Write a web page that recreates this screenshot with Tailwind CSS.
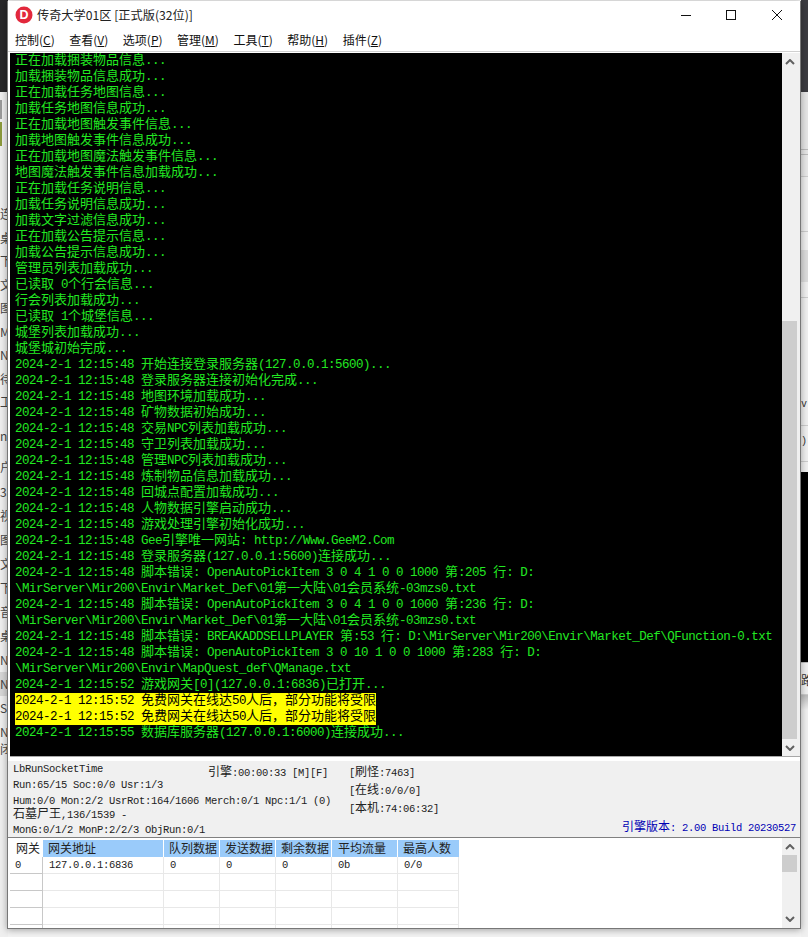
<!DOCTYPE html>
<html lang="en">
<head>
  <meta charset="UTF-8" />
  <title>传奇大学01区</title>
  <script src="https://cdn.jsdelivr.net/npm/@tailwindcss/browser@4"></script>
</head>
<body class="relative w-[808px] h-[937px] overflow-hidden bg-[#f3f3f3] font-['Noto_Sans_CJK_SC',sans-serif]">
  <!-- desktop behind the window, left edge -->
  <div class="absolute left-0 top-0 w-[8px] h-full overflow-hidden flex flex-col bg-[#efefef]">
    <div class="h-[92px] shrink-0 bg-[#28282a]"></div>
    <div class="h-[8px] shrink-0"></div>
    <div class="h-[19px] w-[2px] shrink-0 bg-[#9a9a9a]"></div>
    <div class="h-[3px] shrink-0"></div>
    <div class="h-[24px] w-[2px] shrink-0 bg-[#8b9a3c]"></div>
    <div class="h-[56px] shrink-0"></div>
    <div id="leftLabels" class="flex flex-col text-[12px] leading-[24px] text-[#444] whitespace-nowrap"></div>
    <div class="-mt-[3px] text-[12px] leading-[16px] text-[#444] whitespace-nowrap">闭</div>
  </div>

  <!-- desktop behind the window, right edge -->
  <div class="absolute left-[801px] top-0 w-[7px] h-full overflow-hidden flex flex-col bg-[#f0f0f0] text-[12px] leading-[16px] text-[#333] whitespace-nowrap">
    <div class="h-[92px] shrink-0 bg-[#3b3b40]"></div>
    <div class="h-[58px] shrink-0 bg-[#e6e6e6] border-b border-[#bbbbbb]"></div>
    <div class="h-[5px] shrink-0 bg-[#e6e6e6] border-b border-[#bbbbbb]"></div>
    <div class="h-[22px] shrink-0 bg-[#e8e8e8] border-b border-[#cccccc]"></div>
    <div class="h-[55px] shrink-0 bg-[#eeeeee] border-b border-[#cccccc]"></div>
    <div class="h-[18px] shrink-0"></div>
    <div class="h-[32px] shrink-0 bg-[#dcdcdc]"></div>
    <div class="h-[16px] shrink-0 border-b border-[#cccccc]"></div>
    <div class="h-[128px] shrink-0 pt-[99px] border-b border-[#cccccc] text-[10px] font-['Liberation_Mono',monospace]">v</div>
    <div class="h-[36px] shrink-0 border-b border-[#cccccc] pt-[8px] text-[10px] font-['Liberation_Mono',monospace]">)</div>
    <div class="h-[10px] shrink-0"></div>
    <div class="h-[190px] shrink-0 bg-black"></div>
    <div class="h-[10px] shrink-0 border-t border-[#bbbbbb]"></div>
    <div class="h-[23px] shrink-0 border-b border-[#cccccc]">路</div>
    <div class="h-[15px] shrink-0 bg-gradient-to-b from-[#bbbbbb] to-[#f0f0f0]"></div>
  </div>

  <!-- main window -->
  <div class="absolute left-[7px] top-[1px] w-[794px] h-[928px] flex flex-col bg-white border-x border-b border-[#777777] shadow-[0_1px_7px_rgba(0,0,0,0.35)]">
    <!-- title bar -->
    <div class="h-[27px] shrink-0 flex items-center relative">
      <svg class="ml-[7px] mr-[4px]" width="18" height="18" viewBox="0 0 18 18">
        <circle cx="9" cy="9" r="8.5" fill="#e2283c" />
        <text x="9" y="13.4" text-anchor="middle" font-size="12.5" font-weight="700" fill="#ffffff" font-family="Liberation Sans, sans-serif">D</text>
      </svg>
      <span class="text-[12.2px] leading-[16px] text-[#222]">传奇大学01区 [正式版(32位)]</span>
      <div class="ml-auto flex items-center h-full">
        <svg width="46" height="27" viewBox="0 0 46 27"><path d="M9 14.500H19" stroke="#111" stroke-width="1" /></svg>
        <svg width="46" height="27" viewBox="0 0 46 27"><rect x="8.500" y="9.500" width="9" height="9" fill="none" stroke="#111" stroke-width="1" /></svg>
        <svg width="36" height="27" viewBox="0 0 36 27"><path d="M8 9L18 19M18 9L8 19" stroke="#111" stroke-width="1" /></svg>
      </div>
    </div>
    <!-- menu -->
    <div class="h-[23px] shrink-0 flex items-center pl-[7px] gap-[14.5px] text-[12px] leading-[16px] text-[#111]">
      <span>控制(<u>C</u>)</span>
      <span>查看(<u>V</u>)</span>
      <span>选项(<u>P</u>)</span>
      <span>管理(<u>M</u>)</span>
      <span>工具(<u>T</u>)</span>
      <span>帮助(<u>H</u>)</span>
      <span>插件(<u>Z</u>)</span>
    </div>
    <div class="h-[2px] shrink-0 border-t border-[#d0d0d0] bg-white"></div>

    <!-- log -->
    <div class="h-[703px] shrink-0 flex pl-[2px]">
      <div id="log" class="flex-1 bg-black pl-[5px] overflow-hidden text-[#22e822] font-['Liberation_Mono','Noto_Sans_CJK_SC',monospace] text-[12.5px] tracking-[-0.5px] leading-[16px] whitespace-pre"></div>
      <div class="w-[18px] shrink-0 bg-[#f0f0f0] flex flex-col">
        <div class="h-[17px] shrink-0 flex items-center justify-center pr-[2px]">
          <svg width="10" height="6" viewBox="0 0 10 6"><path d="M1 5L5 1L9 5" fill="none" stroke="#606060" stroke-width="2" /></svg>
        </div>
        <div class="h-[251px] shrink-0"></div>
        <div class="h-[418px] shrink-0 w-[15px] bg-[#cdcdcd]"></div>
        <div class="flex-1 flex items-center justify-center pr-[2px]">
          <svg width="10" height="6" viewBox="0 0 10 6"><path d="M1 1L5 5L9 1" fill="none" stroke="#606060" stroke-width="2" /></svg>
        </div>
      </div>
    </div>
    <div class="h-[5px] shrink-0 ml-[2px] border-t border-[#a8a8a8] bg-white"></div>

    <!-- status panel -->
    <div class="h-[76px] shrink-0 grid bg-[#f0f0f0] text-[#222] font-['Liberation_Mono','Noto_Sans_CJK_SC',monospace] text-[10.5px] tracking-[-0.3px] whitespace-pre">
      <div class="col-start-1 row-start-1 pl-[5px] flex flex-col">
        <div data-mix class="h-[16px] leading-[16px]">LbRunSocketTime</div>
        <div data-mix class="h-[16px] leading-[16px]">Run:65/15 Soc:0/0 Usr:1/3</div>
        <div data-mix class="h-[14px] leading-[16px]">Hum:0/0 Mon:2/2 UsrRot:164/1606 Merch:0/1 Npc:1/1 (0)</div>
        <div data-mix class="h-[15px] leading-[16px]">石墓尸王,136/1539 -</div>
        <div data-mix class="h-[15px] leading-[16px]">MonG:0/1/2 MonP:2/2/3 ObjRun:0/1</div>
      </div>
      <div data-mix class="col-start-1 row-start-1 pl-[200px] pt-[4px] leading-[16px]">引擎:00:00:33 [M][F]</div>
      <div class="col-start-1 row-start-1 pl-[341px] pt-[3px] flex flex-col">
        <div data-mix class="h-[18px] leading-[18px]">[刷怪:7463]</div>
        <div data-mix class="h-[18px] leading-[18px]">[在线:0/0/0]</div>
        <div data-mix class="h-[18px] leading-[18px]">[本机:74:06:32]</div>
      </div>
      <div data-mix class="col-start-1 row-start-1 self-end justify-self-end pr-[4px] pb-[1px] leading-[16px] text-[#0000b4]">引擎版本: 2.00 Build 20230527</div>
    </div>

    <!-- gateway grid -->
    <div class="flex-1 min-h-0 flex border-t border-[#808080] bg-white">
      <div class="flex-1 pl-[2px] pt-[2px] overflow-hidden text-[12px] text-[#222]">
        <div class="grid grid-cols-[33px_121px_56px_56px_56px_66px_61px] h-[17px]">
          <div class="pl-[6px] leading-[16px] border-r border-white">网关</div>
          <div class="pl-[5px] leading-[16px] bg-[#9acbfa] border-r border-white">网关地址</div>
          <div class="pl-[5px] leading-[16px] bg-[#9acbfa] border-r border-white">队列数据</div>
          <div class="pl-[5px] leading-[16px] bg-[#9acbfa] border-r border-white">发送数据</div>
          <div class="pl-[5px] leading-[16px] bg-[#9acbfa] border-r border-white">剩余数据</div>
          <div class="pl-[6px] leading-[16px] bg-[#9acbfa] border-r border-white">平均流量</div>
          <div class="pl-[5px] leading-[16px] bg-[#9acbfa]">最高人数</div>
        </div>
        <div id="rows" class="font-['Liberation_Mono',monospace] text-[10.5px] tracking-[-0.3px]"></div>
      </div>
      <div class="w-[18px] shrink-0 bg-[#f0f0f0] flex flex-col">
        <div class="h-[17px] shrink-0 flex items-center justify-center pr-[2px]">
          <svg width="10" height="6" viewBox="0 0 10 6"><path d="M1 5L5 1L9 5" fill="none" stroke="#606060" stroke-width="2" /></svg>
        </div>
        <div class="h-[17px] shrink-0 w-[15px] bg-[#cdcdcd]"></div>
        <div class="flex-1 flex items-end justify-center pb-[6px] pr-[2px]">
          <svg width="10" height="6" viewBox="0 0 10 6"><path d="M1 1L5 5L9 1" fill="none" stroke="#606060" stroke-width="2" /></svg>
        </div>
      </div>
    </div>
  </div>

  <script>
    const CJK = /([\u3000-\u9fff\uff00-\uffef]+)/;

    // Latin runs are 7px wide in the log, the CJK runs 13px: wrap them so each gets its own size
    function mix(el, text, cjkClass) {
      text.split(CJK).forEach((part, i) => {
        if (!part) return;
        if (i % 2) {
          const s = document.createElement('span');
          s.className = cjkClass;
          s.textContent = part;
          el.appendChild(s);
        } else {
          el.appendChild(document.createTextNode(part));
        }
      });
    }

    const t = '2024-2-1 12:15:48 ';
    const logLines = [
      '正在加载捆装物品信息...',
      '加载捆装物品信息成功...',
      '正在加载任务地图信息...',
      '加载任务地图信息成功...',
      '正在加载地图触发事件信息...',
      '加载地图触发事件信息成功...',
      '正在加载地图魔法触发事件信息...',
      '地图魔法触发事件信息加载成功...',
      '正在加载任务说明信息...',
      '加载任务说明信息成功...',
      '加载文字过滤信息成功...',
      '正在加载公告提示信息...',
      '加载公告提示信息成功...',
      '管理员列表加载成功...',
      '已读取 0个行会信息...',
      '行会列表加载成功...',
      '已读取 1个城堡信息...',
      '城堡列表加载成功...',
      '城堡城初始完成...',
      t + '开始连接登录服务器(127.0.0.1:5600)...',
      t + '登录服务器连接初始化完成...',
      t + '地图环境加载成功...',
      t + '矿物数据初始成功...',
      t + '交易NPC列表加载成功...',
      t + '守卫列表加载成功...',
      t + '管理NPC列表加载成功...',
      t + '炼制物品信息加载成功...',
      t + '回城点配置加载成功...',
      t + '人物数据引擎启动成功...',
      t + '游戏处理引擎初始化成功...',
      t + 'Gee引擎唯一网站: http://Www.GeeM2.Com',
      t + '登录服务器(127.0.0.1:5600)连接成功...',
      t + '脚本错误: OpenAutoPickItem 3 0 4 1 0 0 1000 第:205 行: D:',
      '\\MirServer\\Mir200\\Envir\\Market_Def\\01第一大陆\\01会员系统-03mzs0.txt',
      t + '脚本错误: OpenAutoPickItem 3 0 4 1 0 0 1000 第:236 行: D:',
      '\\MirServer\\Mir200\\Envir\\Market_Def\\01第一大陆\\01会员系统-03mzs0.txt',
      t + '脚本错误: BREAKADDSELLPLAYER 第:53 行: D:\\MirServer\\Mir200\\Envir\\Market_Def\\QFunction-0.txt',
      t + '脚本错误: OpenAutoPickItem 3 0 10 1 0 0 1000 第:283 行: D:',
      '\\MirServer\\Mir200\\Envir\\MapQuest_def\\QManage.txt',
      '2024-2-1 12:15:52 游戏网关[0](127.0.0.1:6836)已打开...',
      { warn: '2024-2-1 12:15:52 免费网关在线达50人后，部分功能将受限' },
      { warn: '2024-2-1 12:15:52 免费网关在线达50人后，部分功能将受限' },
      '2024-2-1 12:15:55 数据库服务器(127.0.0.1:6000)连接成功...'
    ];

    const log = document.getElementById('log');
    logLines.forEach(line => {
      const row = document.createElement('div');
      if (line.warn) {
        row.className = 'h-[16px] w-fit bg-[#ffff00] text-black';
        mix(row, line.warn, 'text-[13px] tracking-[0px]');
      } else {
        row.className = 'h-[16px]';
        mix(row, line, 'text-[13px] tracking-[0px]');
      }
      log.appendChild(row);
    });

    document.querySelectorAll('[data-mix]').forEach(el => {
      const text = el.textContent;
      el.textContent = '';
      mix(el, text, 'text-[12px] tracking-[0px]');
    });

    // the desktop icon captions are not evenly spaced
    const labels = [
      ['连', 'h-[23.5px]'], ['桌', 'h-[23.5px]'], ['下', 'h-[23.5px]'], ['文', 'h-[23.5px]'],
      ['图', 'h-[23.5px]'], ['M', 'h-[23.5px]'], ['N', 'h-[23.5px]'], ['待', 'h-[23.5px]'],
      ['工', 'h-[23.5px]'], ['n', 'h-[24px] mt-[10px]'], ['户', 'h-[24px] mt-[7px]'], ['3', 'h-[24px] mt-[1px]'],
      ['视', 'h-[24px]'], ['图', 'h-[24px]'], ['文', 'h-[24px]'], ['下', 'h-[24px]'],
      ['音', 'h-[24px]'], ['桌', 'h-[24px]'], ['N', 'h-[24px]'], ['N', 'h-[24px] bg-[#d6d6d6]'],
      ['S', 'h-[24px]'], ['N', 'h-[24px]']
    ];
    const left = document.getElementById('leftLabels');
    labels.forEach(([label, cls]) => {
      const d = document.createElement('div');
      d.className = cls;
      d.textContent = label;
      left.appendChild(d);
    });

    const cells = ['0', '127.0.0.1:6836', '0', '0', '0', '0b', '0/0'];
    const rows = document.getElementById('rows');
    for (let r = 0; r < 5; r++) {
      const row = document.createElement('div');
      row.className = 'grid grid-cols-[33px_121px_56px_56px_56px_66px_61px] h-[17px]';
      cells.forEach((c, i) => {
        const d = document.createElement('div');
        d.className = i === 0
          ? 'pl-[5px] leading-[16px] border-r border-b border-[#c8c8c8]'
          : 'pl-[6px] leading-[16px] border-r border-b border-[#e8e8e8]';
        d.textContent = r === 0 ? c : '';
        row.appendChild(d);
      });
      rows.appendChild(row);
    }
  </script>
</body>
</html>
